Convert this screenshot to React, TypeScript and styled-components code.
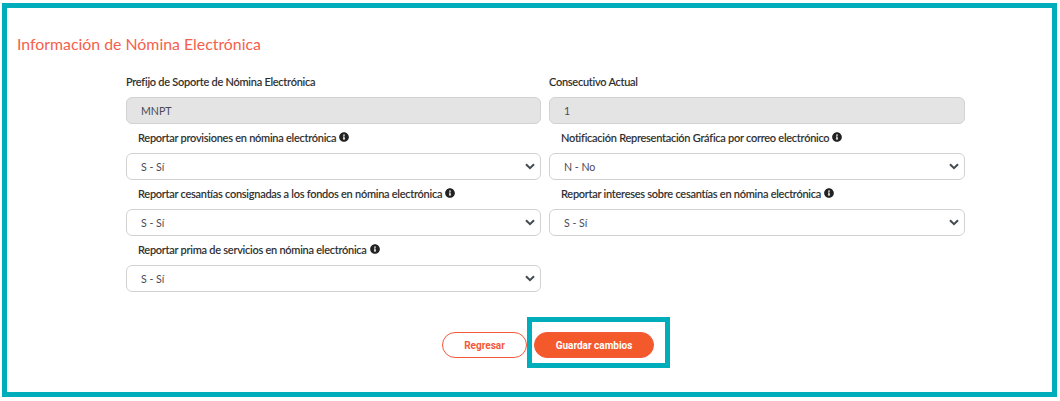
import styled, { createGlobalStyle } from "styled-components";
import { FaInfoCircle } from "react-icons/fa";

const GlobalStyle = createGlobalStyle`
    html, body {
        margin: 0;
        padding: 0;
        background: #fff;
        font-family: "Lato", "Liberation Sans", sans-serif;
    }
`

const Frame = styled.div`
    box-sizing: border-box;
    width: 1055px;
    height: 394px;
    margin: 3px 0 0 2px;
    border: 5px solid #00adbb;
    padding: 27px 9px 0 10px;
`

const Title = styled.h2`
    margin: 0;
    font-size: 15.85px;
    line-height: 18px;
    font-weight: 400;
    color: #f5604c;
`

const FormGrid = styled.div`
    display: grid;
    grid-template-columns: 415px 416px;
    column-gap: 8px;
    margin: 15px 0 0 109px;
`

const Field = styled.div`
    display: flex;
    flex-direction: column;
`

const Label = styled.label<{ $indented?: boolean }>`
    box-sizing: border-box;
    display: flex;
    align-items: center;
    gap: 3px;
    height: 29px;
    padding: 0 0 3px ${props => props.$indented ? '12px' : '0'};
    font-size: 11px;
    letter-spacing: -0.26px;
    font-weight: 500;
    color: #2b2b2b;
    white-space: nowrap;
    -webkit-text-stroke: 0.1px #2b2b2b;
`

const ReadOnlyBox = styled.div`
    box-sizing: border-box;
    height: 27px;
    padding-left: 14px;
    display: flex;
    align-items: center;
    background: #e4e4e4;
    border: 1px solid #d2d2d2;
    border-radius: 6px;
    font-size: 10.6px;
    color: #4a4a55;
`

const SelectBox = styled.div`
    box-sizing: border-box;
    height: 27px;
    padding: 0 5px 0 14px;
    display: flex;
    align-items: center;
    justify-content: space-between;
    background: #fff;
    border: 1px solid #d2d2d2;
    border-radius: 6px;
    font-size: 10.6px;
    color: #4a4a55;
`

const Chevron = () => (
    <svg width="10" height="7" viewBox="0 0 10 7">
        <path d="M1 1.2 L5 5.2 L9 1.2" fill="none" stroke="#444b51" strokeWidth="2" />
    </svg>
)

const Actions = styled.div`
    display: flex;
    justify-content: center;
    margin-top: 40px;
    padding-left: 36px;
    gap: 7px;
`

const Button = styled.button<{ $primary?: boolean }>`
    box-sizing: border-box;
    height: 26px;
    width: ${props => props.$primary ? '120px' : '85px'};
    border-radius: 13px;
    border: 1px solid #f4593a;
    background: ${props => props.$primary ? '#f4592b' : '#fff'};
    color: ${props => props.$primary ? '#fff' : '#f4593a'};
    font-family: "Roboto", "Liberation Sans", sans-serif;
    font-size: 10px;
    font-weight: 700;
    padding: 0;
`

const Highlight = styled.div`
    position: absolute;
    box-sizing: border-box;
    left: 527px;
    top: 317px;
    width: 143px;
    height: 51px;
    border: 5px solid #00adbb;
    pointer-events: none;
`

const Info = styled(FaInfoCircle)`
    width: 10px;
    height: 10px;
    color: #222;
`

interface SelectFieldProps {
    label: string,
    value: string,
}

const SelectField = ({ label, value }: SelectFieldProps) => (
    <Field>
        <Label $indented>{label} <Info /></Label>
        <SelectBox>
            {value}
            <Chevron />
        </SelectBox>
    </Field>
)

const App = () => {
    return (
        <>
            <GlobalStyle />
            <Frame>
                <Title>Información de Nómina Electrónica</Title>
                <FormGrid>
                    <Field>
                        <Label>Prefijo de Soporte de Nómina Electrónica</Label>
                        <ReadOnlyBox>MNPT</ReadOnlyBox>
                    </Field>
                    <Field>
                        <Label>Consecutivo Actual</Label>
                        <ReadOnlyBox>1</ReadOnlyBox>
                    </Field>
                    <SelectField label="Reportar provisiones en nómina electrónica" value="S - Sí" />
                    <SelectField label="Notificación Representación Gráfica por correo electrónico" value="N - No" />
                    <SelectField label="Reportar cesantías consignadas a los fondos en nómina electrónica" value="S - Sí" />
                    <SelectField label="Reportar intereses sobre cesantías en nómina electrónica" value="S - Sí" />
                    <SelectField label="Reportar prima de servicios en nómina electrónica" value="S - Sí" />
                </FormGrid>
                <Actions>
                    <Button>Regresar</Button>
                    <Button $primary>Guardar cambios</Button>
                </Actions>
            </Frame>
            <Highlight />
        </>
    )
}

export default App;
